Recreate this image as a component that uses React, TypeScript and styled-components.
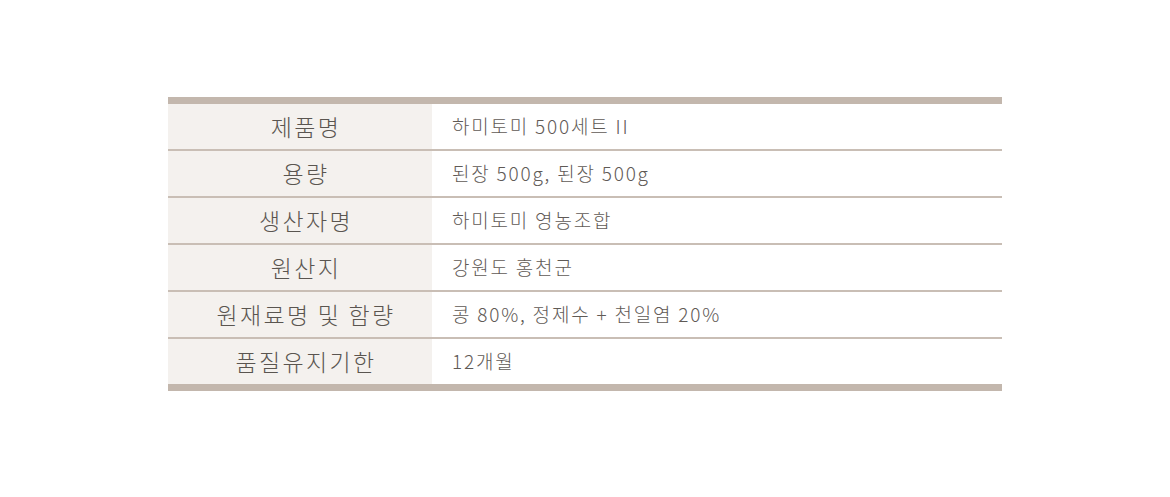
import * as React from 'react'
import styled, { createGlobalStyle } from 'styled-components'

const GlobalStyle = createGlobalStyle`
  body {
    margin: 0;
    background: #ffffff;
    font-family: "Noto Sans CJK KR", "Noto Sans", sans-serif;
  }
`

const Page = styled.div`
  width: 1170px;
  height: 497px;
  padding-top: 97px;
  box-sizing: border-box;
  display: flex;
  justify-content: center;
`

const Table = styled.div`
  width: 834px;
  height: fit-content;
  border-top: 7px solid #c3b7ad;
  border-bottom: 7px solid #c3b7ad;
`

const Row = styled.div`
  display: grid;
  grid-template-columns: 264px 1fr;
  height: 45px;

  & + & {
    border-top: 2px solid #c9beb5;
  }
`

const Label = styled.div`
  background: #f4f1ee;
  display: flex;
  align-items: center;
  justify-content: center;
  padding-left: 12px;
  padding-bottom: 2px;
  font-size: 23px;
  font-weight: 300;
  color: #5a5550;
  letter-spacing: 2.3px;
`

const Value = styled.div`
  display: flex;
  align-items: center;
  padding-left: 20px;
  padding-bottom: 2px;
  font-size: 19px;
  font-weight: 300;
  color: #5f5a56;
  letter-spacing: 1.8px;
`

const rows: [string, string][] = [
  ['제품명', '하미토미 500세트 II'],
  ['용량', '된장 500g, 된장 500g'],
  ['생산자명', '하미토미 영농조합'],
  ['원산지', '강원도 홍천군'],
  ['원재료명 및 함량', '콩 80%, 정제수 + 천일염 20%'],
  ['품질유지기한', '12개월'],
]

export default function App() {
  return (
    <>
      <GlobalStyle />
      <Page>
        <Table>
          {rows.map(([label, value]) => (
            <Row key={label}>
              <Label>{label}</Label>
              <Value>{value}</Value>
            </Row>
          ))}
        </Table>
      </Page>
    </>
  )
}
